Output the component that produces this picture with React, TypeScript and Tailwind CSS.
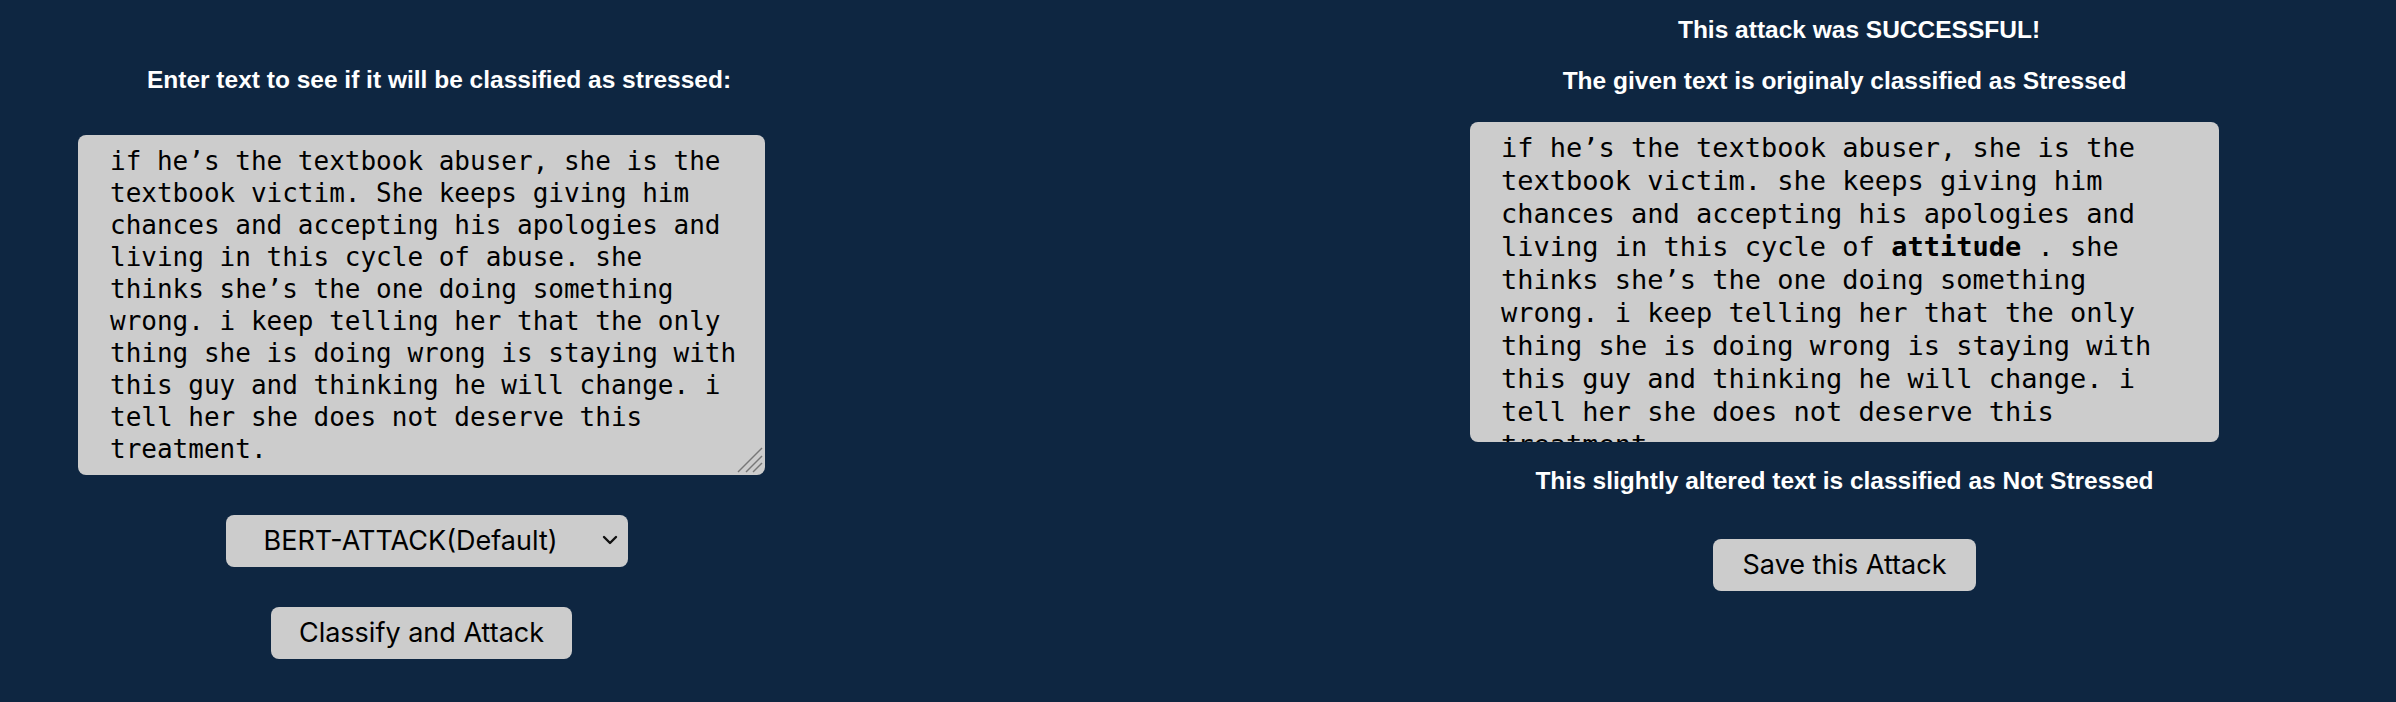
import React, { useState } from "react";

const sample =
  "if he’s the textbook abuser, she is the textbook victim. She keeps giving him chances and accepting his apologies and living in this cycle of abuse. she thinks she’s the one doing something wrong. i keep telling her that the only thing she is doing wrong is staying with this guy and thinking he will change. i tell her she does not deserve this treatment.";

const heading = "font-['Liberation_Sans',Arial,sans-serif] font-bold text-white text-[24.5px] leading-[28px]";
const control =
  "bg-[#cccccc] text-black rounded-lg font-['Inter',sans-serif] text-[27px] leading-[52px] h-[52px]";
const mono = "font-['DejaVu_Sans_Mono','Liberation_Mono',monospace]";

const AttackView = () => {
  const [text, setText] = useState(sample);
  const [recipe, setRecipe] = useState("bert");

  return (
    <div className="w-screen min-h-screen bg-[#0e2641] flex flex-row pl-[78px] gap-[705px]">
      {/* input side */}
      <div className="w-[687px] flex flex-col items-center pt-[66px]">
        <h3 className={`${heading} pl-[35px]`}>Enter text to see if it will be classified as stressed:</h3>

        <div className="relative mt-[41px]">
          <textarea
            value={text}
            onChange={(e) => setText(e.target.value)}
            spellCheck={false}
            className={`block w-[687px] h-[340px] bg-[#cccccc] text-black rounded-lg border-0 outline-none resize-none overflow-hidden pt-[10px] pl-[32px] pr-[24px] ${mono} text-[26px] leading-[32px]`}
          />
          <svg
            className="absolute right-[1px] bottom-[1px] w-[28px] h-[28px] pointer-events-none"
            viewBox="0 0 28 28"
            stroke="#777777"
            strokeWidth="1.4"
          >
            <line x1="2" y1="26" x2="26" y2="2" />
            <line x1="10" y1="26" x2="26" y2="10" />
            <line x1="17" y1="26" x2="26" y2="17" />
          </svg>
        </div>

        <div className="relative mt-[40px] ml-[10px]">
          <select
            value={recipe}
            onChange={(e) => setRecipe(e.target.value)}
            className={`${control} appearance-none w-[402px] pl-[38px] pr-[60px] border-0 outline-none`}
          >
            <option value="bert">BERT-ATTACK(Default)</option>
            <option value="textfooler">TextFooler</option>
            <option value="pwws">PWWS</option>
          </select>
          <svg
            className="absolute right-[10px] top-[19px] w-[16px] h-[12px] pointer-events-none"
            viewBox="0 0 16 12"
            fill="none"
            stroke="#111111"
            strokeWidth="2.4"
            strokeLinecap="round"
            strokeLinejoin="round"
          >
            <path d="M2 3 L8 9 L14 3" />
          </svg>
        </div>

        <button className={`${control} mt-[40px] w-[301px]`}>Classify and Attack</button>
      </div>

      {/* result side */}
      <div className="w-[749px] flex flex-col items-center pt-[16px]">
        <h3 className={`${heading} pl-[29px]`}>This attack was SUCCESSFUL!</h3>
        <h3 className={`${heading} mt-[23px]`}>The given text is originaly classified as Stressed</h3>

        <div className={`mt-[27px] w-[749px] h-[320px] overflow-hidden bg-[#cccccc] text-black rounded-lg pt-[9px] px-[31px] ${mono} text-[27px] leading-[33px]`}>
          if he’s the textbook abuser, she is the textbook victim. she keeps giving him chances and
          accepting his apologies and living in this cycle of <b className="font-bold">attitude</b> . she thinks
          she’s the one doing something wrong. i keep telling her that the only thing she is doing
          wrong is staying with this guy and thinking he will change. i tell her she does not deserve
          this treatment.
        </div>

        <h3 className={`${heading} mt-[25px]`}>This slightly altered text is classified as Not Stressed</h3>

        <button className={`${control} mt-[44px] w-[263px]`}>Save this Attack</button>
      </div>
    </div>
  );
};

export default AttackView;
